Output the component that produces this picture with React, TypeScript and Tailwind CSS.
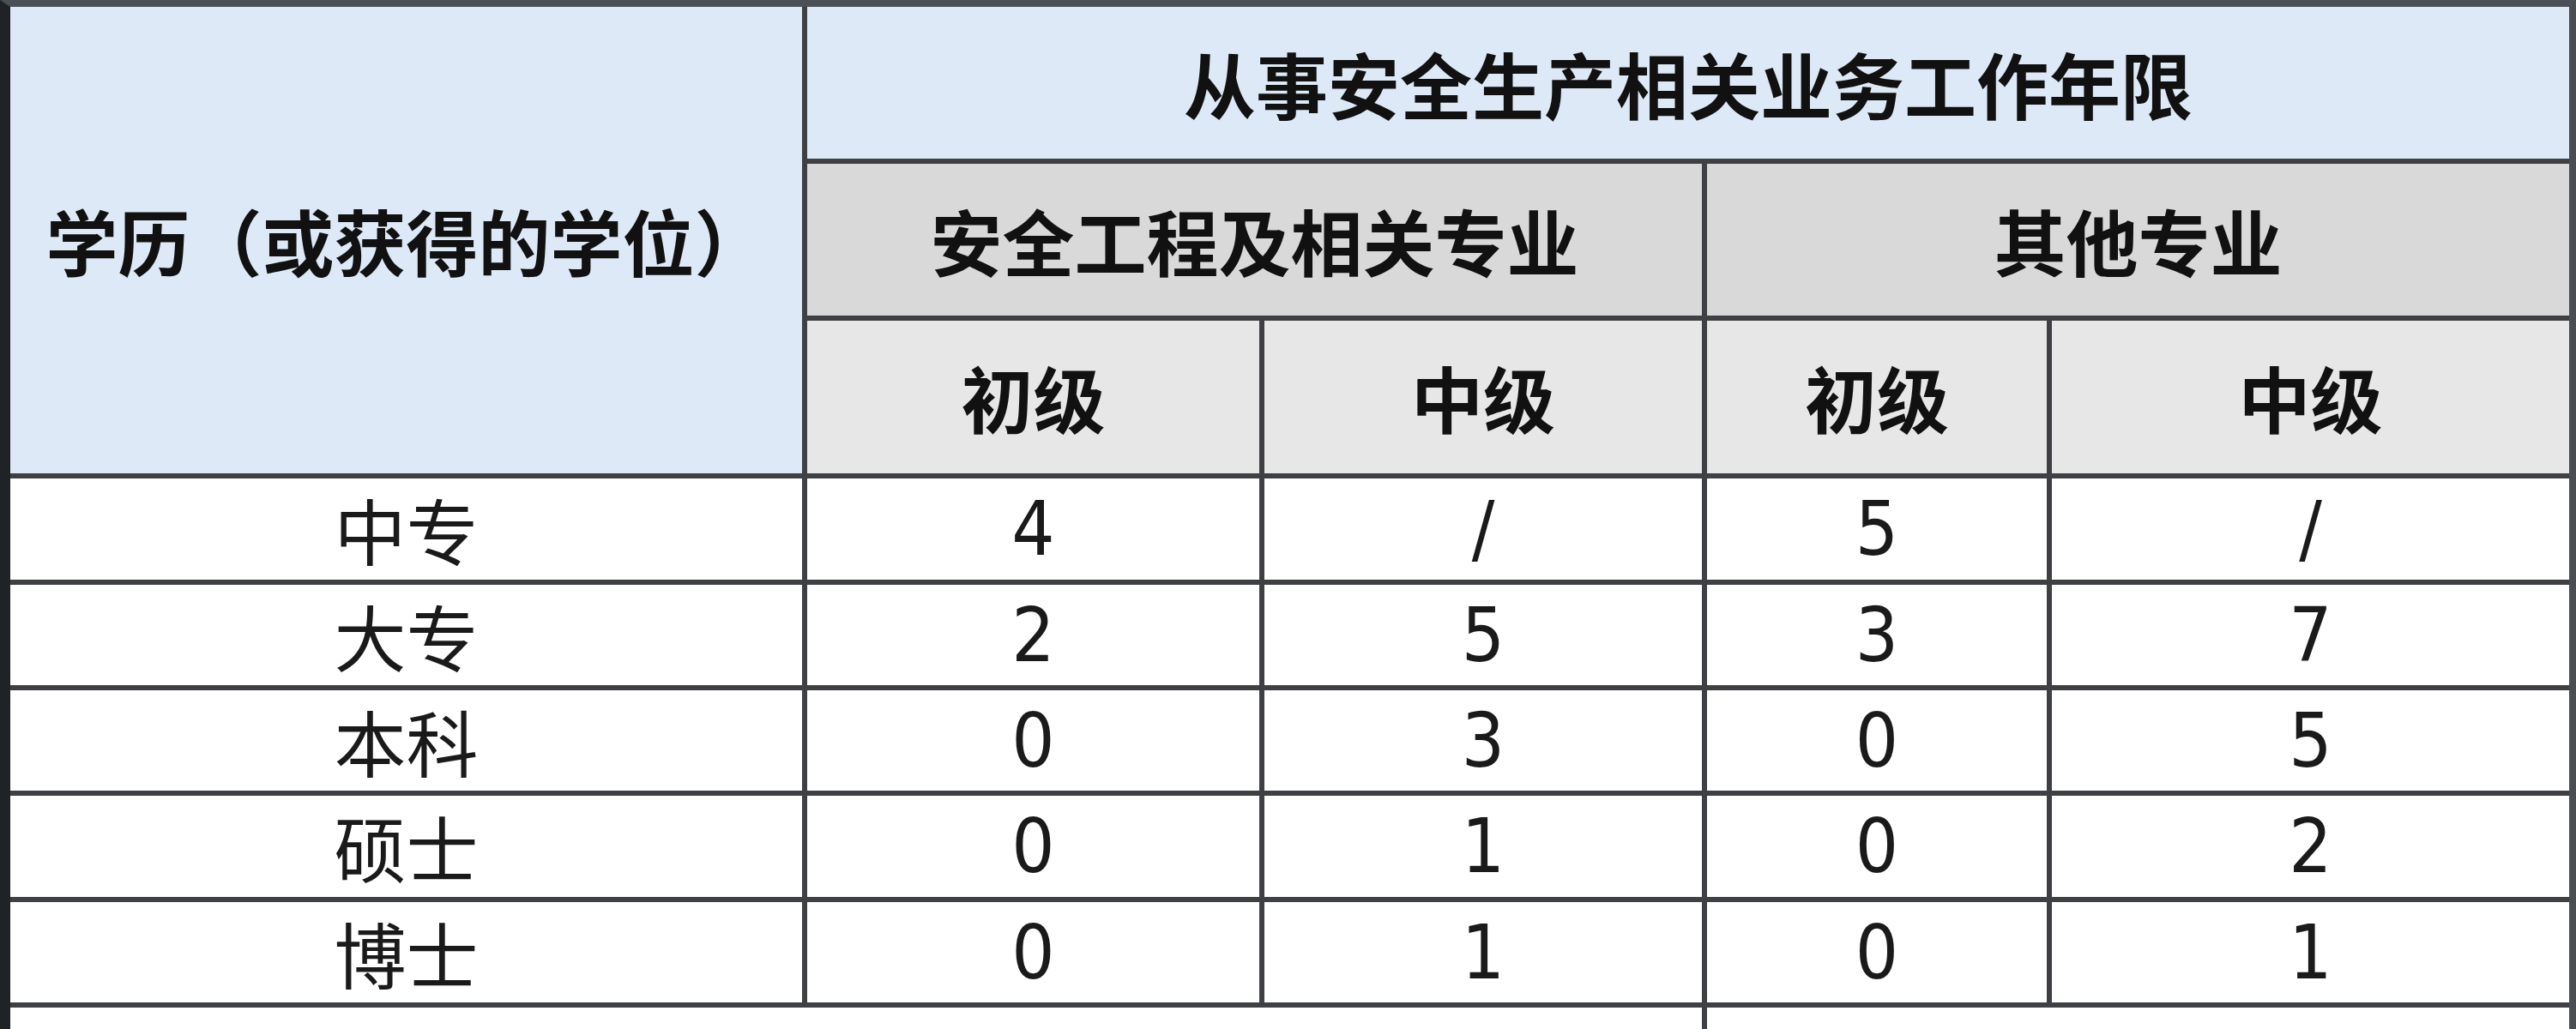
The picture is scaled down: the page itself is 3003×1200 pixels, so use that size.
import { Fragment } from 'react';

const head = 'flex items-center justify-center whitespace-nowrap font-bold text-[84px] leading-none text-[#111]';
const cjk = "font-['Noto_Sans_CJK_SC',sans-serif]";

const rows: { name: string; vals: string[] }[] = [
  { name: '中专', vals: ['4', '/', '5', '/'] },
  { name: '大专', vals: ['2', '5', '3', '7'] },
  { name: '本科', vals: ['0', '3', '0', '5'] },
  { name: '硕士', vals: ['0', '1', '0', '2'] },
  { name: '博士', vals: ['0', '1', '0', '1'] },
];

export default function App() {
  return (
    <div className="h-[1200px] w-[3003px] overflow-hidden bg-white">
      <div
        className={`grid grid-cols-[923px_527px_510px_396px_603px] grid-rows-[177px_177px_178px_118px_117px_117px_118px_117px_25px] gap-[6px] bg-[#3e4044] border-t-[8px] border-t-[#4b4f56] border-l-[12px] border-l-[#1f2227] border-r-[8px] border-r-[#4a4d52] ${cjk}`}
      >
        {/* header */}
        <div className={`row-span-3 bg-[#dde9f6] ${head}`}>学历（或获得的学位）</div>
        <div className={`col-span-4 bg-[#dde9f6] ${head}`}>从事安全生产相关业务工作年限</div>
        <div className={`col-span-2 bg-[#d9d9d9] ${head}`}>安全工程及相关专业</div>
        <div className={`col-span-2 bg-[#d9d9d9] ${head}`}>其他专业</div>
        <div className={`bg-[#e8e7e7] ${head}`}>初级</div>
        <div className={`bg-[#e8e7e7] ${head}`}>中级</div>
        <div className={`bg-[#e8e7e7] ${head}`}>初级</div>
        <div className={`bg-[#e8e7e7] ${head}`}>中级</div>

        {/* data */}
        {rows.map((r) => (
          <Fragment key={r.name}>
            <div className="flex items-center justify-center bg-white text-[84px] leading-none text-[#1a1a1a]">
              {r.name}
            </div>
            {r.vals.map((v, i) => (
              <div
                key={i}
                className="flex items-center justify-center bg-white font-['DejaVu_Sans',sans-serif] font-stretch-condensed text-[88px] leading-none text-[#1a1a1a]"
              >
                {v}
              </div>
            ))}
          </Fragment>
        ))}

        <div className="col-span-3 bg-white" />
        <div className="col-span-2 bg-white" />
      </div>
    </div>
  );
}
